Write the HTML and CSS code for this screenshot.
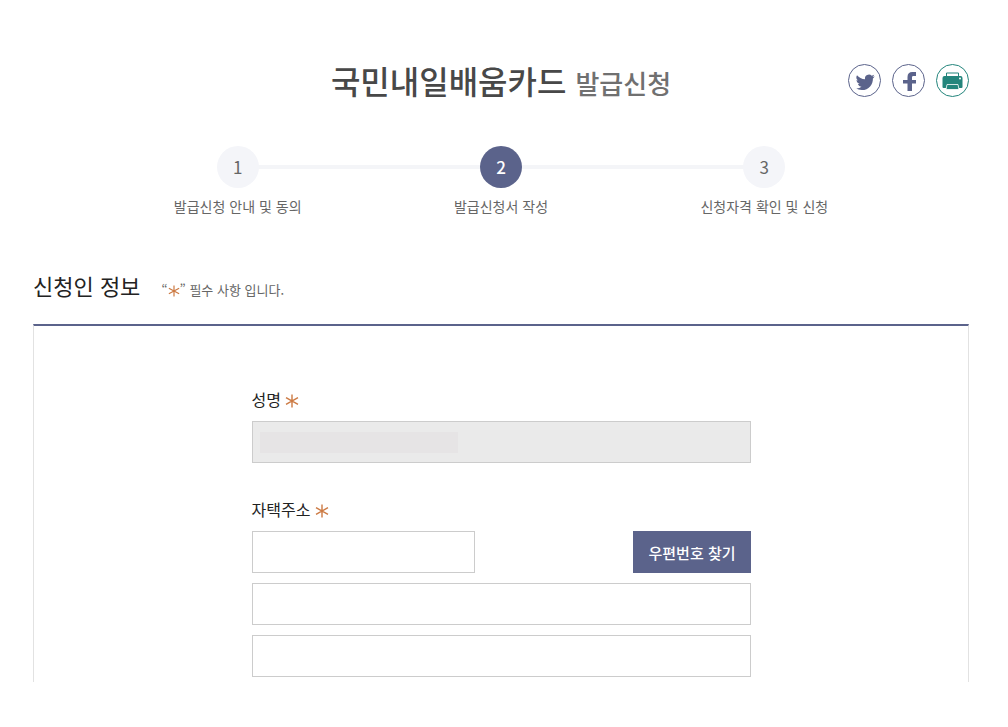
FILE: index.html
```html
<!DOCTYPE html>
<html lang="ko">
<head>
    <meta charset="UTF-8">
    <meta name="viewport" content="width=device-width, initial-scale=1">
    <title>국민내일배움카드 발급신청</title>
    <link rel="stylesheet" href="styles.css">
</head>
<body>
    <svg class="symbols" aria-hidden="true">
        <symbol id="star" viewBox="0 0 14 14">
            <path d="M7 .5v13M1 3.7l12 6.6M13 3.7L1 10.3" fill="none" stroke="currentColor" stroke-width="1.4"/>
        </symbol>
    </svg>
    <div class="page">
        <header class="header">
            <h1 class="title">국민내일배움카드 <span>발급신청</span></h1>
            <div class="sns">
                <a class="sns-link" href="#" aria-label="트위터">
                    <svg width="20" height="22" viewBox="0 -1.500 24 24"><path fill="currentColor" d="M23.6 4.9c-.8.4-1.700.6-2.600.8.9-.6 1.700-1.500 2-2.600-.9.500-1.900.9-2.900 1.100a4.700 4.700 0 0 0-8 4.300C8.100 8.300 4.700 6.400 2.400 3.600a4.700 4.700 0 0 0 1.500 6.300c-.8 0-1.500-.2-2.100-.6v.1c0 2.300 1.600 4.200 3.800 4.600-.7.200-1.400.2-2.100.1.600 1.800 2.300 3.200 4.300 3.200A9.400 9.400 0 0 1 .9 19.300 13.300 13.300 0 0 0 8.100 21.400c8.700 0 13.700-7.300 13.400-14 .8-.7 1.600-1.500 2.100-2.500z"/></svg>
                </a>
                <a class="sns-link" href="#" aria-label="페이스북">
                    <svg width="22" height="22" viewBox="0 0 22 22"><path fill="currentColor" d="M18 2v4h-2.500c-1.200 0-1.500.6-1.500 1.600V10h4v3.500h-4V21H9.500v-7.500H5V10h4.500V7c0-3.200 1.900-5 4.800-5z"/></svg>
                </a>
                <button class="sns-link print" type="button" aria-label="인쇄">
                    <svg width="23" height="20" viewBox="0 0 23 20">
                        <path d="M5.500 5V2h12v3" fill="none" stroke="currentColor"/>
                        <path d="M3.500 5h16a2 2 0 0 1 2 2v9a1 1 0 0 1-1 1h-18a1 1 0 0 1-1-1V7a2 2 0 0 1 2-2z" fill="currentColor"/>
                        <circle cx="19" cy="7.500" r="1" fill="#fff"/>
                        <path d="M6 13.500h11l1 5H5z" fill="currentColor" stroke="#fff" stroke-width=".8"/>
                    </svg>
                </button>
            </div>
        </header>

        <ol class="steps">
            <li class="step"><span class="step-num">1</span>발급신청 안내 및 동의</li>
            <li class="step on" aria-current="step"><span class="step-num">2</span>발급신청서 작성</li>
            <li class="step"><span class="step-num">3</span>신청자격 확인 및 신청</li>
        </ol>

        <div class="section-head">
            <h2>신청인 정보</h2>
            <p>“<svg class="star" role="img" aria-label="필수"><use href="#star"/></svg>” 필수 사항 입니다.</p>
        </div>

        <form class="panel">
            <div class="fields">
                <div class="field">
                    <label for="name">성명 <svg class="star" role="img" aria-label="필수"><use href="#star"/></svg></label>
                    <input class="masked" type="text" id="name" name="name" disabled>
                </div>
                <div class="field">
                    <label for="zipcode">자택주소 <svg class="star" role="img" aria-label="필수"><use href="#star"/></svg></label>
                    <div class="zip-row">
                        <input type="text" id="zipcode" name="zipcode">
                        <button class="btn" type="button">우편번호 찾기</button>
                    </div>
                    <input type="text" name="addr1" aria-label="기본주소">
                    <input type="text" name="addr2" aria-label="상세주소">
                </div>
            </div>
        </form>
    </div>
</body>
</html>
```
FILE: styles.css
```css
* {
    box-sizing: border-box;
}
body {
    margin: 0;
    background: #fff;
    color: #222;
    font-family: "Noto Sans CJK KR", "Noto Sans", sans-serif;
    font-size: 14px;
}
h1, h2, p, ol {
    margin: 0;
    padding: 0;
}
.symbols {
    display: none;
}
.page {
    padding: 53px 39px 40px 33px;
}

/* 상단 제목 */
.header {
    display: grid;
    grid-template-columns: 1fr auto 1fr;
    align-items: center;
}
.title {
    grid-column: 2;
    padding-top: 2px;
    color: #484848;
    font-size: 32px;
    font-weight: 500;
    line-height: 50px;
}
.title span {
    color: #707070;
    font-size: 26px;
}
.sns {
    display: flex;
    justify-content: flex-end;
    gap: 11px;
}
.sns-link {
    display: flex;
    align-items: center;
    justify-content: center;
    width: 33px;
    height: 33px;
    padding: 0;
    border: 1px solid #5b638b;
    border-radius: 50%;
    background: #fff;
    color: #5b638b;
}
.sns-link svg {
    flex: none;
}
.print {
    border-color: #23857c;
    color: #23857c;
}

/* 진행 단계 */
.steps {
    display: grid;
    grid-template-columns: repeat(3, 1fr);
    width: 84.4%;
    margin: 38px auto 0;
    list-style: none;
}
.step {
    display: flex;
    flex-direction: column;
    align-items: center;
    gap: 7px;
    color: #666;
    line-height: 22px;
    background: linear-gradient(#f4f5f8, #f4f5f8) 0 19px / 100% 4px no-repeat;
}
.step:first-child {
    background-position: 100% 19px;
    background-size: 50% 4px;
}
.step:last-child {
    background-size: 50% 4px;
}
.step-num {
    width: 42px;
    height: 42px;
    border-radius: 50%;
    background: #f4f5f9;
    font-size: 17px;
    line-height: 42px;
    text-align: center;
}
.on .step-num {
    background: #5b638b;
    color: #fff;
    font-weight: 500;
}

/* 신청인 정보 */
.section-head {
    display: flex;
    align-items: baseline;
    gap: 21px;
    margin: 51px 0 22px;
}
.section-head h2 {
    font-size: 22px;
    font-weight: 400;
    line-height: 34px;
}
.section-head p {
    color: #666;
    font-size: 13px;
}
.star {
    width: 14px;
    height: 14px;
    color: #cc7a43;
    vertical-align: -2px;
}
.section-head .star {
    width: 12px;
    height: 12px;
}
.panel {
    padding: 62px 20px 5px;
    border: 1px solid #e2e2e2;
    border-top: 2px solid #5b638b;
    border-bottom: 0;
}
.fields {
    display: grid;
    gap: 35px;
    max-width: 499px;
    margin: 0 auto;
}
.field {
    display: grid;
    gap: 10px;
}
.field label {
    font-size: 16px;
    line-height: 23px;
}
.field input {
    width: 100%;
    height: 42px;
    padding: 0 10px;
    border: 1px solid #ccc;
    border-radius: 0;
    background: #fff;
    color: #222;
    font: inherit;
}
.field .masked {
    background: linear-gradient(#e6e4e5, #e6e4e5) 7px 10px / 198px 21px no-repeat #eaeaea;
}
.zip-row {
    display: flex;
    justify-content: space-between;
}
.field .zip-row input {
    width: 223px;
}
.btn {
    height: 42px;
    padding: 0 15px;
    border: 0;
    background: #5b638b;
    color: #fff;
    font-family: inherit;
    font-size: 15px;
    font-weight: 500;
}
```
